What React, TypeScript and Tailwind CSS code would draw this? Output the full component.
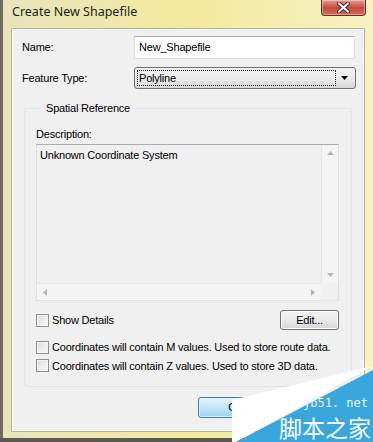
import React from 'react';

function CheckBox() {
  return (
    <span className="w-[13px] h-[13px] shrink-0 border border-[#8e8f8f] bg-gradient-to-br from-[#dcdcdc] to-[#fbfbfb] shadow-[inset_0_0_0_1px_#f4f4f4]" />
  );
}

function Arrow({ dir }: { dir: 'up' | 'down' | 'left' | 'right' }) {
  const pts = {
    up: '0,4 3.5,0 7,4',
    down: '0,0 3.5,4 7,0',
    left: '4,0 0,3.5 4,7',
    right: '0,0 4,3.5 0,7',
  }[dir];
  const size = dir === 'up' || dir === 'down' ? { w: 7, h: 4 } : { w: 4, h: 7 };
  return (
    <svg width={size.w} height={size.h} viewBox={`0 0 ${size.w} ${size.h}`}>
      <polygon points={pts} fill="#b4b4b4" />
    </svg>
  );
}

export default function App() {
  return (
    <div
      className="relative w-[373px] h-[442px] overflow-hidden bg-gradient-to-r from-[#e9e3bd] via-[#f3ea9c] to-[#f7f1c4] text-[#000]"
      style={{ fontFamily: '"Liberation Sans", Arial, sans-serif' }}
    >
      <div className="absolute inset-y-0 left-0 w-[3px] bg-[#6e6c60]" />
      <div className="absolute inset-x-0 bottom-0 h-[4px] bg-[#5a5850]" />

      {/* title bar */}
      <div className="flex h-[28px] items-start pl-[12px] pr-[7px]">
        <span
          className="mt-[3px] text-[12.5px] text-[#1c1c1c]"
          style={{ fontFamily: '"Noto Sans", "Open Sans", sans-serif' }}
        >
          Create New Shapefile
        </span>
        <div className="ml-auto flex h-[16px] w-[45px] items-center justify-center rounded-b-[4px] border border-t-0 border-[#6d2c28] bg-gradient-to-b from-[#e0a093] via-[#c94a3c] to-[#d36b57] shadow-[inset_0_0_0_1px_rgba(255,255,255,0.35)]">
          <svg width="13" height="11" viewBox="0 0 13 11">
            <path d="M2 1.5 L11 9.5 M11 1.5 L2 9.5" stroke="#4a1d18" strokeWidth="4" strokeLinecap="round" />
            <path d="M2 1.5 L11 9.5 M11 1.5 L2 9.5" stroke="#ffffff" strokeWidth="2.2" strokeLinecap="round" />
          </svg>
        </div>
      </div>

      {/* client area */}
      <div className="ml-[11px] h-[404px] w-[354px] border border-[#b9b38f] bg-[#f0f0f0] text-[11px] tracking-[-0.2px] shadow-[inset_0_0_0_1px_#ffffff]">
        <div className="flex items-center pl-[10px] pr-[9px] pt-[7px]">
          <span className="w-[112px]">Name:</span>
          <div className="flex h-[23px] flex-1 items-center border border-[#dbdfe6] border-t-[#abadb3] bg-white pl-[4px]">
            New_Shapefile
          </div>
        </div>

        <div className="mt-[8px] flex items-center pl-[10px] pr-[8px]">
          <span className="w-[112px]">Feature Type:</span>
          <div className="flex h-[22px] flex-1 items-center rounded-[3px] border border-[#707070] bg-gradient-to-b from-[#f2f2f2] via-[#ebebeb] to-[#d8d8d8] p-[2px]">
            <div className="flex h-full flex-1 items-center border border-dotted border-[#222] pl-[1px]">
              Polyline
            </div>
            <div className="flex w-[17px] justify-center">
              <svg width="7" height="4" viewBox="0 0 7 4">
                <polygon points="0,0 7,0 3.5,4" fill="#000" />
              </svg>
            </div>
          </div>
        </div>

        <fieldset className="mx-[12px] mt-[12px] h-[286px] rounded-[3px] border border-[#dde3e7] px-[11px]">
          <legend className="ml-[5px] px-[5px] leading-[14px]">Spatial Reference</legend>
          <div className="mt-[12px] leading-[14px]">Description:</div>
          <div className="mt-[3px] flex h-[157px] w-[303px] flex-col border border-[#dbdfe6] border-t-[#abadb3]">
            <div className="flex flex-1">
              <div className="flex-1 pl-[3px] pt-[2px]">Unknown Coordinate System</div>
              <div className="flex w-[17px] flex-col items-center justify-between border-l border-[#e4e4e4] bg-[#f4f4f4] py-[6px]">
                <Arrow dir="up" />
                <Arrow dir="down" />
              </div>
            </div>
            <div className="flex h-[17px]">
              <div className="flex flex-1 items-center justify-between border-t border-[#e4e4e4] bg-[#f4f4f4] px-[6px]">
                <Arrow dir="left" />
                <Arrow dir="right" />
              </div>
              <div className="w-[17px] bg-[#f0f0f0]" />
            </div>
          </div>

          <div className="mt-[9px] flex items-center">
            <CheckBox />
            <span className="ml-[3px] whitespace-nowrap">Show Details</span>
            <button className="ml-auto mr-[1px] h-[20px] w-[59px] rounded-[3px] border border-[#707070] bg-gradient-to-b from-[#f2f2f2] via-[#ebebeb] to-[#d5d5d5] text-[11px] shadow-[inset_0_0_0_1px_#fcfcfc]">
              Edit...
            </button>
          </div>

          <div className="mt-[9px] flex items-center">
            <CheckBox />
            <span className="ml-[3px] whitespace-nowrap">Coordinates will contain M values. Used to store route data.</span>
          </div>
          <div className="mt-[2px] flex items-center">
            <CheckBox />
            <span className="ml-[3px] whitespace-nowrap">Coordinates will contain Z values. Used to store 3D data.</span>
          </div>
        </fieldset>

        <div className="mt-[10px] flex pl-[186px]">
          <button className="h-[21px] w-[76px] rounded-[3px] border border-[#3c7fb1] bg-gradient-to-b from-[#e5f4fc] via-[#c4e5f6] to-[#98d1ef] text-[11px] shadow-[inset_0_0_0_1px_#d8f0fb]">
            OK
          </button>
        </div>
      </div>

      {/* jb51 watermark */}
      <div className="absolute bottom-0 right-0 h-[76px] w-[141px]">
        <svg className="absolute inset-0" width="141" height="76" viewBox="0 0 141 76">
          <polygon points="0,34 141,0 4,76 0,76" fill="#ffffff" />
          <polygon points="141,4 141,76 4,76" fill="#3aa7dc" />
        </svg>
        <div
          className="absolute right-[5px] top-[31px] text-[12px] leading-none text-[#e6f4fb]"
          style={{ fontFamily: '"DejaVu Sans Mono", monospace' }}
        >
          jb51. net
        </div>
        <div
          className="absolute right-[2px] bottom-[3px] text-[23px] leading-none text-white"
          style={{ fontFamily: '"Noto Sans CJK SC", sans-serif' }}
        >
          脚本之家
        </div>
      </div>
    </div>
  );
}
